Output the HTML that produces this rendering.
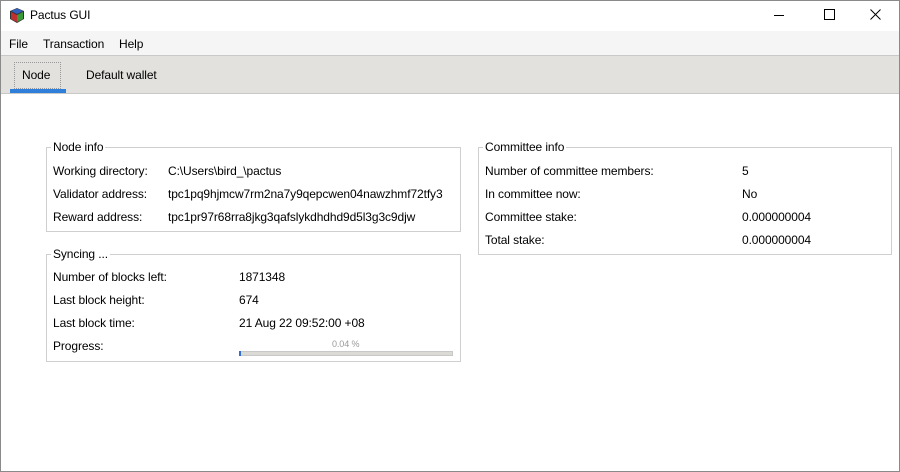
<!DOCTYPE html>
<html><head><style>
body{margin:0;width:900px;height:472px;overflow:hidden;font-family:"Liberation Sans",sans-serif;font-size:12px;letter-spacing:-0.1px;color:#000;background:#fff;position:relative}
.win{position:absolute;left:0;top:0;width:898px;height:470px;border:1px solid #8a8a8a}
.t{position:absolute;white-space:nowrap}
.box{position:absolute;border:1px solid #cfcfcf}
.lbl{position:absolute;background:#fff;padding:0 2px;top:-8px;left:4px}
</style></head><body>
<div class="win"></div>
<svg style="position:absolute;left:10px;top:8px" width="14" height="15" viewBox="0 0 14 15"><polygon points="7,0 14,3 14,11 7,15 0,11 0,3" fill="#333"/><polygon points="1,4 7,7 7,14 1,11" fill="#c03030"/><polygon points="7,7 13,4 13,11 7,14" fill="#3a9a3a"/><polygon points="1,3 7,0.5 13,3 7,6" fill="#3060c0"/></svg>
<div class="t" style="left:30px;top:8px">Pactus GUI</div>
<div class="t" style="left:774px;top:15px;width:10px;height:1px;background:#000"></div>
<div class="t" style="left:824px;top:9px;width:9px;height:9px;border:1px solid #000"></div>
<svg style="position:absolute;left:870px;top:9px" width="11" height="11" viewBox="0 0 11 11"><path d="M0.5 0.5L10.5 10.5M10.5 0.5L0.5 10.5" stroke="#000" stroke-width="1"/></svg>
<div style="position:absolute;left:1px;top:31px;width:898px;height:25px;background:#f5f5f5"></div>
<div class="t" style="left:9px;top:37px">File</div>
<div class="t" style="left:43px;top:37px">Transaction</div>
<div class="t" style="left:119px;top:37px">Help</div>
<div style="position:absolute;left:1px;top:55px;width:898px;height:39px;background:#e3e1de;border-top:1px solid #c8c8c8;border-bottom:1px solid #c8c8c8;box-sizing:border-box"></div>
<div style="position:absolute;left:14px;top:62px;width:47px;height:27px;border:1px dotted #999;box-sizing:border-box"></div>
<div class="t" style="left:22px;top:68px">Node</div>
<div class="t" style="left:86px;top:68px">Default wallet</div>
<div style="position:absolute;left:10px;top:89px;width:56px;height:4px;background:#2e7fd9"></div>

<div class="box" style="left:46px;top:147px;width:413px;height:83px"><span class="lbl">Node info</span></div>
<div class="t" style="left:53px;top:164px">Working directory:</div><div class="t" style="left:168px;top:164px">C:\Users\bird_\pactus</div>
<div class="t" style="left:53px;top:187px">Validator address:</div><div class="t" style="left:168px;top:187px">tpc1pq9hjmcw7rm2na7y9qepcwen04nawzhmf72tfy3</div>
<div class="t" style="left:53px;top:210px">Reward address:</div><div class="t" style="left:168px;top:210px">tpc1pr97r68rra8jkg3qafslykdhdhd9d5l3g3c9djw</div>

<div class="box" style="left:46px;top:254px;width:413px;height:106px"><span class="lbl">Syncing ...</span></div>
<div class="t" style="left:53px;top:270px">Number of blocks left:</div><div class="t" style="left:239px;top:270px">1871348</div>
<div class="t" style="left:53px;top:293px">Last block height:</div><div class="t" style="left:239px;top:293px">674</div>
<div class="t" style="left:53px;top:316px">Last block time:</div><div class="t" style="left:239px;top:316px">21 Aug 22 09:52:00 +08</div>
<div class="t" style="left:53px;top:339px">Progress:</div>
<div class="t" style="left:332px;top:339px;font-size:9px;color:#999">0.04 %</div>
<div style="position:absolute;left:239px;top:351px;width:212px;height:3px;background:#dcdad5;border:1px solid #c8c8c8"></div>
<div style="position:absolute;left:239px;top:351px;width:2px;height:5px;background:#2e6fd0"></div>

<div class="box" style="left:478px;top:147px;width:412px;height:106px"><span class="lbl">Committee info</span></div>
<div class="t" style="left:485px;top:164px">Number of committee members:</div><div class="t" style="left:742px;top:164px">5</div>
<div class="t" style="left:485px;top:187px">In committee now:</div><div class="t" style="left:742px;top:187px">No</div>
<div class="t" style="left:485px;top:210px">Committee stake:</div><div class="t" style="left:742px;top:210px">0.000000004</div>
<div class="t" style="left:485px;top:233px">Total stake:</div><div class="t" style="left:742px;top:233px">0.000000004</div>
</body></html>
